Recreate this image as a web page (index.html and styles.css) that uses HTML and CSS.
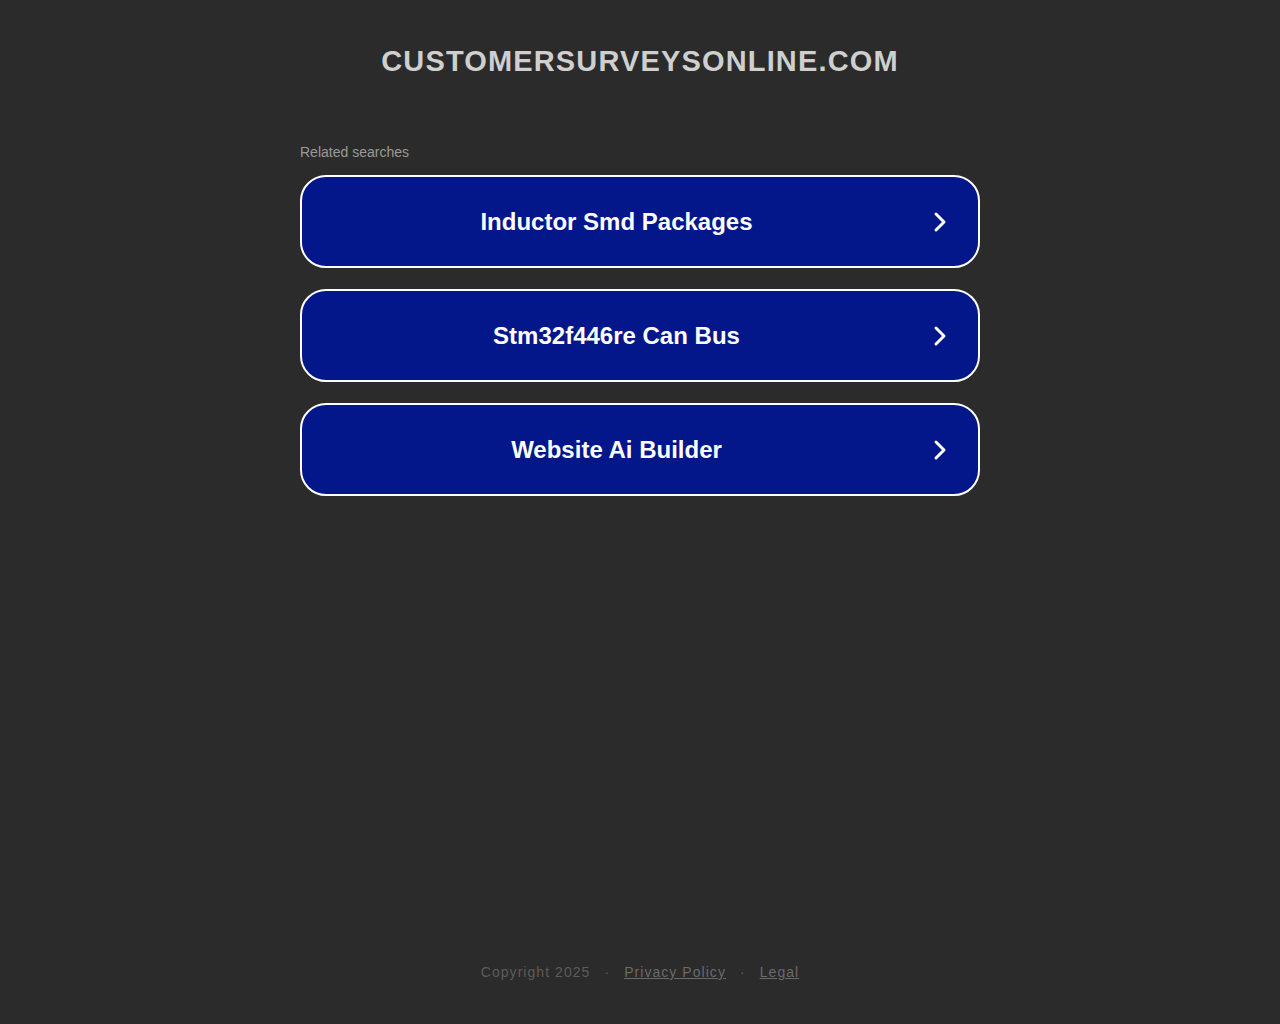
FILE: index.html
```html
<!DOCTYPE html>
<html lang="en">
<head>
<meta charset="utf-8">
<title>customersurveysonline.com</title>
<link rel="stylesheet" href="styles.css">
</head>
<body>
<div class="page">
  <header class="header">
    <h1 class="domain">customersurveysonline.com</h1>
  </header>
  <main class="content">
    <p class="related">Related searches</p>
    <div class="list">
      <a class="card" href="#"><span class="card-text">Inductor Smd Packages</span><svg class="chev" viewBox="0 0 18 24" width="18" height="24"><path d="M5 4 L13 12 L5 20" fill="none" stroke="#fff" stroke-width="3" stroke-linecap="round" stroke-linejoin="round"/></svg></a>
      <a class="card" href="#"><span class="card-text">Stm32f446re Can Bus</span><svg class="chev" viewBox="0 0 18 24" width="18" height="24"><path d="M5 4 L13 12 L5 20" fill="none" stroke="#fff" stroke-width="3" stroke-linecap="round" stroke-linejoin="round"/></svg></a>
      <a class="card" href="#"><span class="card-text">Website Ai Builder</span><svg class="chev" viewBox="0 0 18 24" width="18" height="24"><path d="M5 4 L13 12 L5 20" fill="none" stroke="#fff" stroke-width="3" stroke-linecap="round" stroke-linejoin="round"/></svg></a>
    </div>
  </main>
  <footer class="footer">
    <span class="copy">Copyright 2025</span>
    <span class="dot">·</span>
    <a class="flink" href="#">Privacy Policy</a>
    <span class="dot">·</span>
    <a class="flink" href="#">Legal</a>
  </footer>
</div>
</body>
</html>
```
FILE: styles.css
```css
html, body {
  margin: 0;
  padding: 0;
  background: #2b2b2b;
  font-family: "Liberation Sans", Arial, sans-serif;
}
.page {
  height: 1024px;
  display: flex;
  flex-direction: column;
}
.header {
  padding-top: 44px;
  text-align: center;
}
.domain {
  margin: 0;
  font-size: 29px;
  line-height: 34px;
  font-weight: 700;
  letter-spacing: 1.15px;
  text-transform: uppercase;
  color: #cfcfcf;
}
.content {
  width: 680px;
  margin: 0 auto;
  padding-top: 66px;
  flex: 1;
}
.related {
  margin: 0 0 15px 0;
  font-size: 14px;
  line-height: 16px;
  color: #9a9a9a;
}
.list {
  display: flex;
  flex-direction: column;
  gap: 21px;
}
.card {
  height: 89px;
  box-sizing: content-box;
  border: 2px solid #ffffff;
  border-radius: 26px;
  background: #03168a;
  display: flex;
  align-items: center;
  text-decoration: none;
}
.card-text {
  flex: 1;
  text-align: center;
  color: #ffffff;
  font-size: 24px;
  font-weight: 700;
  line-height: 28px;
}
.chev {
  display: block;
  margin-right: 29px;
  flex: none;
}
.footer {
  padding-bottom: 44px;
  display: flex;
  justify-content: center;
  align-items: center;
  gap: 14px;
  font-size: 14px;
  letter-spacing: 1.05px;
  color: #5c5c5c;
}
.flink {
  color: #6a6a6a;
  text-decoration: underline;
}
.dot {
  color: #5c5c5c;
}
```
